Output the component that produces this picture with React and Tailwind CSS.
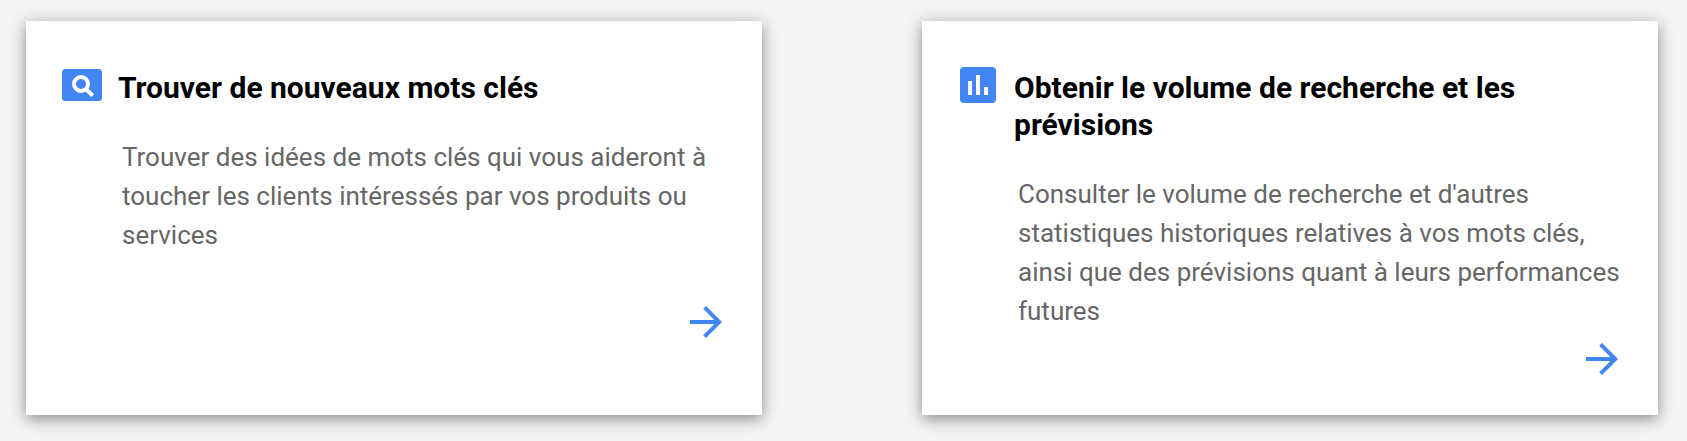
import React from 'react';

const SearchIcon = () => (
  <svg className="mt-0.5 h-8 w-[42px] shrink-0" viewBox="0 0 42 32">
    <rect x="1" y="0" width="40" height="32" rx="3.5" fill="#4285f4" />
    <circle cx="20" cy="15" r="7" fill="none" stroke="#fff" strokeWidth="4" />
    <path d="M24.5 19.5l7.2 7.2" stroke="#fff" strokeWidth="4" />
  </svg>
);

const ChartIcon = () => (
  <svg className="h-9 w-[42px] shrink-0" viewBox="0 0 42 36">
    <rect x="3" y="0" width="36" height="36" rx="4" fill="#4285f4" />
    <path d="M11 14h4v14h-4zM19 8h4v20h-4zM27 20h4v8h-4z" fill="#fff" />
  </svg>
);

const ArrowIcon = () => (
  <svg className="h-8 w-8" viewBox="4 4 16 16" fill="#4285f4">
    <path d="M12 4l-1.41 1.41L16.17 11H4v2h12.17l-5.58 5.59L12 20l8-8z" />
  </svg>
);

const cards = [
  {
    icon: <SearchIcon />,
    title: ['Trouver de nouveaux mots clés'],
    text: [
      'Trouver des idées de mots clés qui vous aideront à',
      'toucher les clients intéressés par vos produits ou',
      'services',
    ],
    arrow: 'mt-[51px]',
  },
  {
    icon: <ChartIcon />,
    title: ['Obtenir le volume de recherche et les', 'prévisions'],
    text: [
      "Consulter le volume de recherche et d'autres",
      'statistiques historiques relatives à vos mots clés,',
      'ainsi que des prévisions quant à leurs performances',
      'futures',
    ],
    arrow: 'mt-3',
  },
];

function Card({ icon, title, text, arrow }) {
  return (
    <section className="h-[394px] w-[736px] shrink-0 bg-white pt-[46px] pl-[35px] shadow-[0_4px_14px_rgba(0,0,0,0.4),0_1px_24px_rgba(0,0,0,0.05)]">
      <div className="flex items-start">
        {icon}
        <h2 className="mt-0.5 ml-[15px] text-[30px] leading-[37px] font-bold text-black">
          {title.map((line) => (
            <span key={line} className="block whitespace-nowrap">{line}</span>
          ))}
        </h2>
      </div>
      <p className="mt-8 ml-[61px] text-[26px] leading-[39px] text-[#666]">
        {text.map((line) => (
          <span key={line} className="block whitespace-nowrap">{line}</span>
        ))}
      </p>
      <div className={`flex justify-end pr-10 ${arrow}`}>
        <ArrowIcon />
      </div>
    </section>
  );
}

export default function App() {
  return (
    <main className="flex h-[441px] w-full gap-40 overflow-hidden bg-[#f4f4f4] pt-[21px] pl-[26px] font-[Roboto,sans-serif]">
      {cards.map((card) => (
        <Card key={card.title[0]} {...card} />
      ))}
    </main>
  );
}
